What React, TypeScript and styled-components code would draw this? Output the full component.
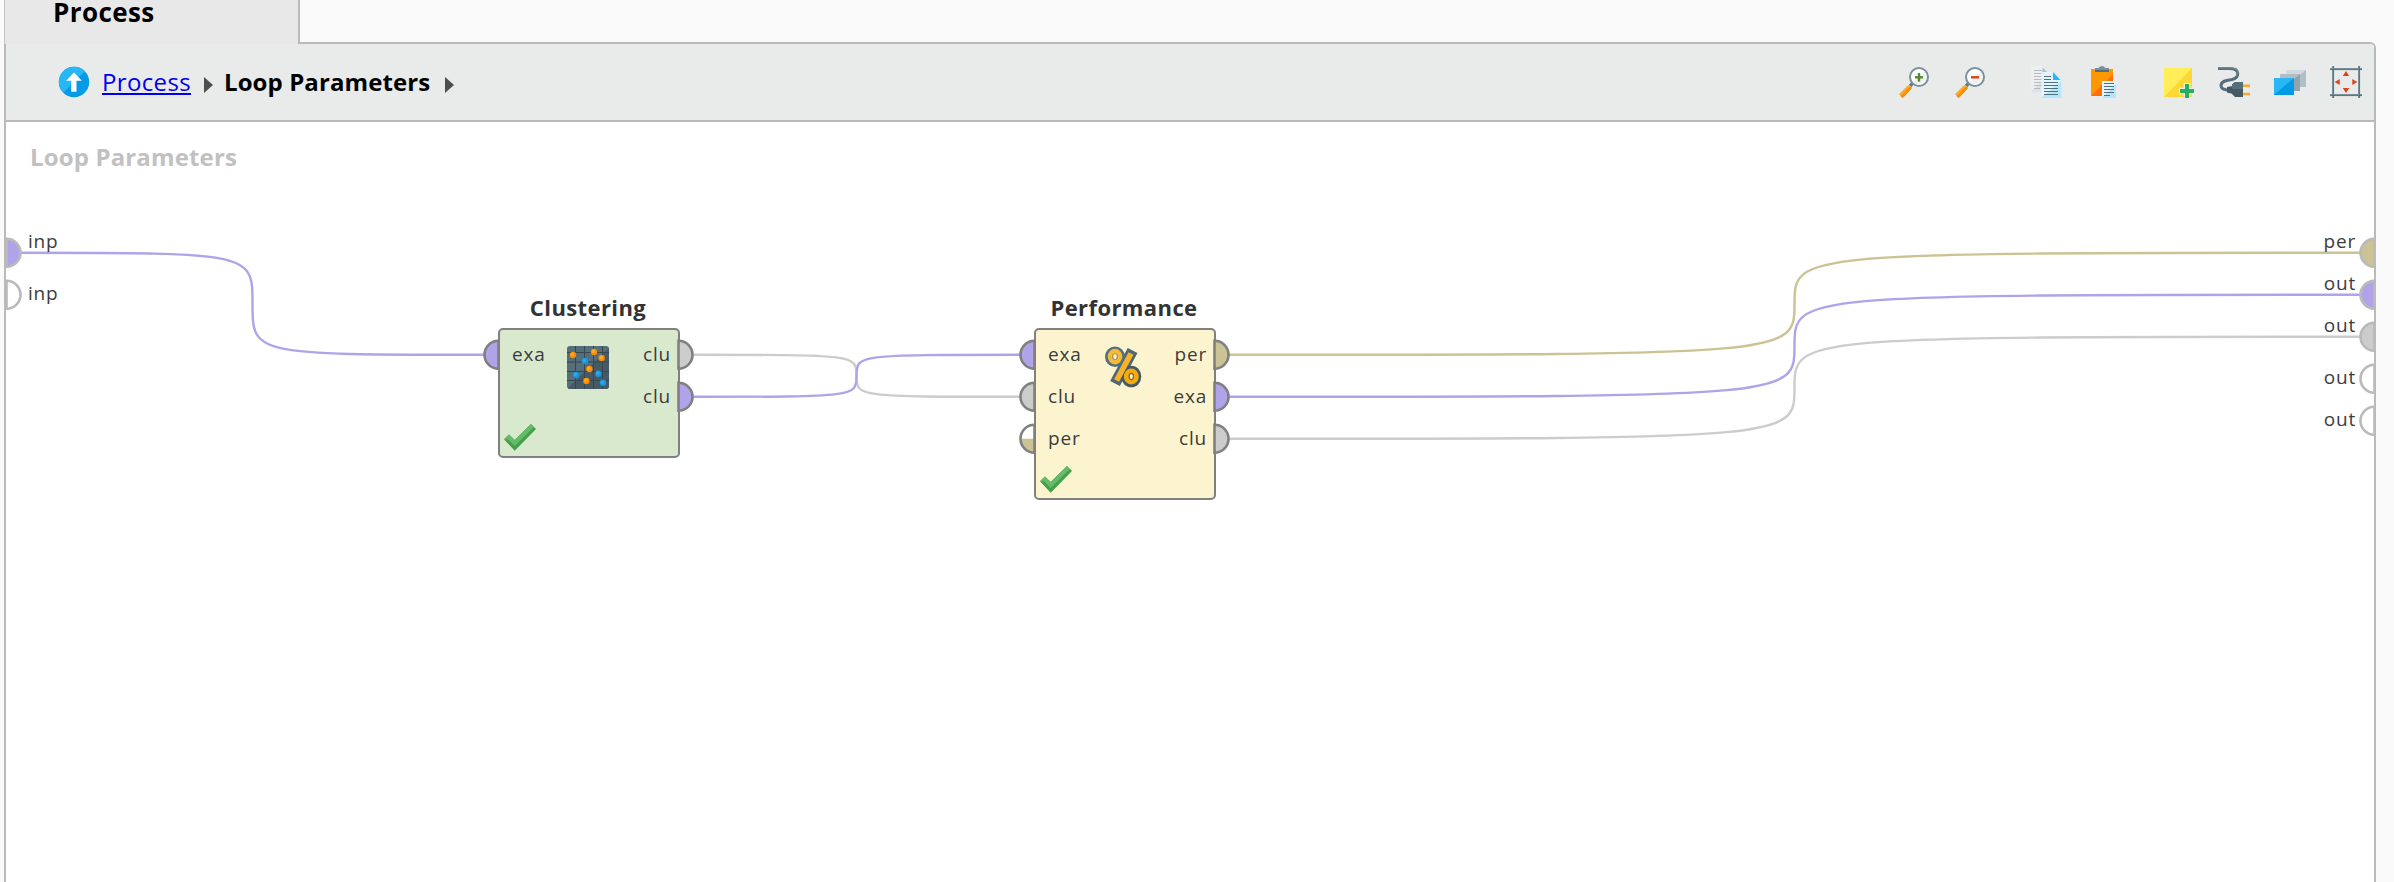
import React from "react";
import styled, { createGlobalStyle } from "styled-components";

const GlobalStyle = createGlobalStyle`
  html, body { margin: 0; padding: 0; background: #fafafa; }
  body { font-family: "Open Sans", "Noto Sans", sans-serif; overflow: hidden; }
  * { box-sizing: border-box; }
`;

const violet = "#b1a3ea";
const khaki = "#cbc394";
const silver = "#cccccc";
const line = "#bababa";

const Page = styled.div`
  display: flex;
  flex-direction: column;
  width: 2394px;
  height: 882px;
  padding: 0 18px 0 4px;
  overflow: hidden;
`;

const TabStrip = styled.div`
  display: flex;
  flex: none;
  height: 42px;
`;

const Tab = styled.div`
  position: relative;
  z-index: 1;
  width: 296px;
  height: 44px;
  padding-left: 48px;
  border-left: 1px solid #c4c4c4;
  border-right: 2px solid ${line};
  background: #e8e8e8;
  color: #000;
  font-size: 26px;
  font-weight: 700;
  line-height: 25px;
  letter-spacing: 0.4px;
`;

const Panel = styled.div`
  display: flex;
  flex: 1;
  flex-direction: column;
  border: 2px solid ${line};
  border-bottom: 0;
  border-radius: 0 6px 0 0;
  background: #fff;
`;

const Toolbar = styled.div`
  display: flex;
  flex: none;
  align-items: center;
  justify-content: space-between;
  height: 78px;
  padding: 0 12px 0 52px;
  border-bottom: 2px solid ${line};
  border-radius: 0 4px 0 0;
  background: #e8ebea;
`;

const Breadcrumb = styled.nav`
  display: flex;
  align-items: center;
  font-size: 24px;
  line-height: 34px;
  white-space: nowrap;
`;

const CrumbLink = styled.a`
  margin: -1px 0 0 12px;
  color: #0000ee;
  letter-spacing: 0.35px;
  text-decoration: underline;
  text-decoration-thickness: 2px;
  text-underline-offset: 2px;
`;

const CrumbCurrent = styled.span`
  margin: -1px 0 0 11px;
  color: #000;
  font-weight: 700;
  letter-spacing: 0.1px;
`;

const Arrow = styled.span<{ $gap: number }>`
  width: 0;
  height: 0;
  margin: 6px 0 0 ${(p) => p.$gap}px;
  border: solid transparent;
  border-width: 8px 0 8px 9px;
  border-left-color: #4e4e4e;
`;

const Tools = styled.div`
  display: flex;
  gap: 44px;
`;

const ToolGroup = styled.div`
  display: flex;
  gap: 24px;
`;

const Glyph = styled.svg`
  display: block;
  flex: none;
  overflow: visible;
`;

const Canvas = styled.div`
  position: relative;
  flex: 1;
  overflow: hidden;
  background: #fff;
`;

const CanvasTitle = styled.div`
  padding: 18px 0 0 24px;
  color: #c1c1c1;
  font-size: 24px;
  font-weight: 700;
  line-height: 34px;
  letter-spacing: 0.15px;
`;

const Wires = styled.svg`
  position: absolute;
  inset: 0;
`;

const PortLabel = styled.span`
  color: #3c3c3c;
  font-size: 19px;
  line-height: 42px;
  letter-spacing: 0.8px;
  white-space: nowrap;
`;

const EdgeLabel = styled(PortLabel)<{ $y: number; $side: "left" | "right" }>`
  position: absolute;
  top: ${(p) => p.$y - 21}px;
  ${(p) => (p.$side === "left" ? "left: 22px;" : "right: 18px;")}
`;

const Operator = styled.div<{ $x: number; $y: number }>`
  position: absolute;
  left: ${(p) => p.$x}px;
  top: ${(p) => p.$y}px;
  display: flex;
  flex-direction: column;
  width: 182px;
`;

const OperatorTitle = styled.div`
  align-self: center;
  height: 36px;
  margin-left: -2px;
  color: #333;
  font-size: 22px;
  font-weight: 700;
  line-height: 31px;
  letter-spacing: 0.4px;
  white-space: nowrap;
`;

const OperatorBody = styled.div<{ $fill: string; $height: number }>`
  display: grid;
  grid-template-columns: 1fr 42px 1fr;
  grid-template-rows: auto 1fr;
  height: ${(p) => p.$height}px;
  padding: 3px 7px 5px 12px;
  border: 2px solid #808080;
  border-radius: 5px;
  background: ${(p) => p.$fill};
`;

const PortColumn = styled.div<{ $align: "start" | "end" }>`
  display: flex;
  flex-direction: column;
  align-items: flex-${(p) => p.$align};
`;

const IconSlot = styled.div`
  padding-top: 13px;
  margin-left: -4px;
`;

const StatusSlot = styled.div`
  align-self: end;
  margin-left: -8px;
`;

const Icon = ({ children }: { children: React.ReactNode }) => (
  <Glyph width="32" height="32" viewBox="0 0 32 32">{children}</Glyph>
);

const Magnifier = ({ plus }: { plus?: boolean }) => (
  <Icon>
    <path d="M12 20l3-3" stroke="#607d8b" strokeWidth="3.4" />
    <path d="M1 28.3L10.3 19l3.7 3L4.7 32z" fill="#ffa726" />
    <path d="M2.8 30.2L12 20.5l2 1.5L4.7 32z" fill="#fb8c00" />
    <circle cx="21" cy="11" r="9" fill="#fff" stroke="#78909c" strokeWidth="2" />
    <path d="M26.6 5.4a8 8 0 0 1-11.2 11.2z" fill="#eef0f1" />
    <path d="M17 11.3h8" stroke={plus ? "#558b2f" : "#d84315"} strokeWidth="2.4" />
    {plus && <path d="M21 7v8.6" stroke="#558b2f" strokeWidth="2.4" />}
  </Icon>
);

const CopyIcon = () => (
  <Icon>
    <path d="M1 0h11l5 5v21H1z" fill="#eceff1" />
    <path d="M1 26L17 9v17z" fill="#dbe1e4" />
    <path d="M12.5 1.5l4.5 4.5h-4.500z" fill="#b0bec5" />
    <path d="M4 4.500h8M4 7.500h8M4 10.500h8M4 13.500h8M4 16.500h8M4 19.500h8M4 22.500h6" stroke="#b7bcbf" />
    <path d="M11.300 6H23l8.300 8.300V32h-20z" fill="#e1f5fe" />
    <path d="M11.300 32l20-17.500V32z" fill="#b3e5fc" />
    <path d="M23 6l7.500 8H23z" fill="#29b6f6" />
    <path d="M14 10.500h7M14 13.500h7M14 16.500h14M14 19.500h14M14 22.500h14M14 25.500h14M14 28.500h14" stroke="#546e7a" />
  </Icon>
);

const PasteIcon = () => (
  <Icon>
    <path d="M5 3h22v27H5z" fill="#ff9800" />
    <path d="M5 30L27 8v22z" fill="#ff6f00" />
    <path d="M9 6V2h3.500q3.500-4 7 0H23v4z" fill="#78909c" />
    <path d="M9 4h14v2H9z" fill="#546e7a" />
    <path d="M16 15h14v17H16z" fill="#e1f5fe" />
    <path d="M16 32l14-14v14z" fill="#b3e5fc" />
    <path d="M18 17.500h10M18 20.500h10M18 23.500h10M18 26.500h10M18 29.500h6" stroke="#546e7a" />
  </Icon>
);

const NoteIcon = () => (
  <Icon>
    <path d="M2 2h28v29H2z" fill="#ffee58" />
    <path d="M2 31L30 2v29z" fill="#fdd835" />
    <path d="M25 17v16M17 25h16" stroke="#e8ebea" strokeWidth="6.500" />
    <path d="M25 18v14M18 25h14" stroke="#27ae60" strokeWidth="4" />
  </Icon>
);

const PlugIcon = () => (
  <Icon>
    <path d="M0 2.500h12c10 0 10 9.500 2 11C6 14.500 3 16 3 19.500c0 3 2.500 4 6 4.500h4" fill="none" stroke="#546e7a" strokeWidth="3" />
    <path d="M0 1.800h12c8 0 9 5 6.500 8" fill="none" stroke="#78909c" />
    <path d="M9 21l6-1v8l-6-1.500z" fill="#455a64" />
    <path d="M14 18.500L17 16h8v15h-8l-3-3z" fill="#455a64" />
    <path d="M14 18.500L17 16h8v7H14z" fill="#546e7a" />
    <path d="M25 19.700h7M25 28h7" stroke="#ffa726" strokeWidth="2.400" />
  </Icon>
);

const StackIcon = () => (
  <Icon>
    <path d="M12 4h20v17H12z" fill="#cfd8dc" />
    <path d="M32 4v17H12z" fill="#b0bec5" />
    <path d="M6 8h20v17H6z" fill="#b0bec5" />
    <path d="M26 8v17H6z" fill="#90a4ae" />
    <path d="M0 12h20v17H0z" fill="#29b6f6" />
    <path d="M20 12v17H0z" fill="#039be5" />
  </Icon>
);

const FitIcon = () => (
  <Icon>
    <path d="M3 0v32M29 0v32M0 3h32M0 29h32" stroke="#78909c" strokeWidth="2" />
    <path d="M3.600 0v32M29.600 0v32M0 3.600h32M0 29.600h32" stroke="#546e7a" strokeWidth="0.800" />
    <path d="M16 5l3.200 5h-6.400zM16 27l3.200-5h-6.400zM4.700 16l5-3v6zM27.300 16l-5-3v6z" fill="#dd4315" />
  </Icon>
);

const UpIcon = () => (
  <Icon>
    <circle cx="16" cy="16" r="15.200" fill="#039be5" />
    <path d="M5.300 26.800A15.200 15.200 0 0 1 26.800 5.300z" fill="#29b6f6" />
    <path d="M16 6.500l7.800 8.200h-5.300v11h-5.300v-11H8.200z" fill="#fff" />
  </Icon>
);

const Check = () => (
  <Glyph width="32" height="27" viewBox="0 0 32 27">
    <path d="M0 15.200L5 10.500l5.700 5.500L27 0l5 5-21.300 21.700z" fill="#43a047" />
    <path d="M0 15.200L5 10.500l5.700 5.500L27 0l3 3-19.300 19L3 14.500l-1.800 1.900z" fill="#66bb6a" />
  </Glyph>
);

const orangeDots = [[6, 9], [27, 6], [34.700, 12], [22.400, 23], [19.400, 35]];
const blueDots = [[18, 15], [9, 29], [31.400, 27.700], [36, 36.800]];

const ClusterIcon = () => (
  <Glyph width="42" height="43" viewBox="0 0 42 43">
    <rect width="42" height="43" rx="3" fill="#546e7a" />
    <path d="M42 2v38q0 3-3 3H3q-2 0-2-1z" fill="#455a64" />
    <path d="M8.500 0v43M17.500 0v43M26.500 0v43M35.500 0v43M0 6.500h42M0 16h42M0 25.500h42M0 34.500h42" stroke="#36474f" strokeWidth="1" />
    {orangeDots.map(([x, y]) => <circle key={`${x}-${y}`} cx={x} cy={y} r="3.200" fill="#fb8c00" />)}
    {orangeDots.map(([x, y]) => <circle key={`h${x}`} cx={x - 0.600} cy={y - 0.600} r="1.800" fill="#ffa726" />)}
    {blueDots.map(([x, y]) => <circle key={`${x}-${y}`} cx={x} cy={y} r="3.200" fill="#1a96dc" />)}
    {blueDots.map(([x, y]) => <circle key={`h${x}`} cx={x - 0.600} cy={y - 0.600} r="1.800" fill="#29a9ee" />)}
  </Glyph>
);

const PercentIcon = () => (
  <Glyph width="42" height="43" viewBox="0 0 42 43">
    <path d="M29.600 4.500L12 37.500" stroke="#4e6876" strokeWidth="11" />
    <ellipse cx="12" cy="10.800" rx="10" ry="10.300" fill="#546e7a" />
    <ellipse cx="28.300" cy="30.500" rx="10" ry="10.800" fill="#455a64" />
    <path d="M28 7.500L13.600 34.500" stroke="#f6b32a" strokeWidth="5.600" />
    <ellipse cx="12" cy="10.600" rx="5" ry="5.500" fill="none" stroke="#f5bb38" strokeWidth="4.600" />
    <ellipse cx="12" cy="10.600" rx="2.200" ry="3" fill="#fcf4cf" stroke="#a98d4a" strokeWidth="0.900" />
    <ellipse cx="28.300" cy="30.500" rx="5" ry="5.600" fill="none" stroke="#f5ab0c" strokeWidth="4.800" />
    <ellipse cx="28.300" cy="30.500" rx="2.100" ry="3.100" fill="#fcf4cf" stroke="#7b6a36" strokeWidth="1.100" />
  </Glyph>
);

interface PortSpec {
  x: number;
  y: number;
  side: "left" | "right";
  fill: string;
  stroke: string;
  half?: boolean;
}

const Port = ({ x, y, side, fill, stroke, half }: PortSpec) => {
  const sweep = side === "right" ? 1 : 0;
  const edge = side === "right" ? 14 : -14;
  return (
    <g transform={`translate(${x} ${y})`}>
      <path d={`M0 -14A14 14 0 0 ${sweep} 0 14Z`} fill={half ? "#fff" : fill} />
      {half && <path d={`M0 0H${edge}A14 14 0 0 0 0 14Z`} fill={fill} />}
      <path d={`M0 -14A14 14 0 0 ${sweep} 0 14Z`} fill="none" stroke={stroke} strokeWidth="2.600" />
    </g>
  );
};

const Wire = ({ x1, y1, x2, y2, color }: { x1: number; y1: number; x2: number; y2: number; color: string }) => {
  const mx = (x1 + x2) / 2;
  const my = (y1 + y2) / 2;
  return (
    <path
      d={`M${x1} ${y1}C${mx} ${y1} ${mx} ${y1} ${mx} ${my}C${mx} ${y2} ${mx} ${y2} ${x2} ${y2}`}
      fill="none"
      stroke={color}
      strokeWidth="2.400"
    />
  );
};

const nodeStroke = "#808080";
const edgeStroke = "#bababa";

const ports: PortSpec[] = [
  { x: 0.500, y: 130.800, side: "right", fill: violet, stroke: edgeStroke },
  { x: 0.500, y: 172.800, side: "right", fill: "#fff", stroke: edgeStroke },
  { x: 492.500, y: 232.800, side: "left", fill: violet, stroke: nodeStroke },
  { x: 672.500, y: 232.800, side: "right", fill: silver, stroke: nodeStroke },
  { x: 672.500, y: 274.800, side: "right", fill: violet, stroke: nodeStroke },
  { x: 1028.500, y: 232.800, side: "left", fill: violet, stroke: nodeStroke },
  { x: 1028.500, y: 274.800, side: "left", fill: silver, stroke: nodeStroke },
  { x: 1028.500, y: 316.800, side: "left", fill: khaki, stroke: nodeStroke, half: true },
  { x: 1208.500, y: 232.800, side: "right", fill: khaki, stroke: nodeStroke },
  { x: 1208.500, y: 274.800, side: "right", fill: violet, stroke: nodeStroke },
  { x: 1208.500, y: 316.800, side: "right", fill: silver, stroke: nodeStroke },
  { x: 2368.500, y: 130.800, side: "left", fill: khaki, stroke: edgeStroke },
  { x: 2368.500, y: 172.800, side: "left", fill: violet, stroke: edgeStroke },
  { x: 2368.500, y: 214.800, side: "left", fill: silver, stroke: edgeStroke },
  { x: 2368.500, y: 256.800, side: "left", fill: "#fff", stroke: edgeStroke },
  { x: 2368.500, y: 298.800, side: "left", fill: "#fff", stroke: edgeStroke },
];

interface OperatorProps {
  x: number;
  y: number;
  title: string;
  fill: string;
  height: number;
  inputs: string[];
  outputs: string[];
  icon: React.ReactNode;
}

const OperatorNode = ({ x, y, title, fill, height, inputs, outputs, icon }: OperatorProps) => (
  <Operator $x={x} $y={y}>
    <OperatorTitle>{title}</OperatorTitle>
    <OperatorBody $fill={fill} $height={height}>
      <PortColumn $align="start">{inputs.map((p, i) => <PortLabel key={i}>{p}</PortLabel>)}</PortColumn>
      <IconSlot>{icon}</IconSlot>
      <PortColumn $align="end">{outputs.map((p, i) => <PortLabel key={i}>{p}</PortLabel>)}</PortColumn>
      <StatusSlot><Check /></StatusSlot>
    </OperatorBody>
  </Operator>
);

export default function App() {
  return (
    <Page>
      <GlobalStyle />
      <TabStrip><Tab>Process</Tab></TabStrip>
      <Panel>
        <Toolbar>
          <Breadcrumb>
            <UpIcon />
            <CrumbLink>Process</CrumbLink>
            <Arrow $gap={13} />
            <CrumbCurrent>Loop Parameters</CrumbCurrent>
            <Arrow $gap={15} />
          </Breadcrumb>
          <Tools>
            <ToolGroup><Magnifier plus /><Magnifier /></ToolGroup>
            <ToolGroup><CopyIcon /><PasteIcon /></ToolGroup>
            <ToolGroup><NoteIcon /><PlugIcon /><StackIcon /><FitIcon /></ToolGroup>
          </Tools>
        </Toolbar>
        <Canvas>
          <CanvasTitle>Loop Parameters</CanvasTitle>
          <OperatorNode
            x={492} y={170} title="Clustering" fill="#d8e9ce" height={130}
            inputs={["exa"]} outputs={["clu", "clu"]} icon={<ClusterIcon />}
          />
          <OperatorNode
            x={1028} y={170} title="Performance" fill="#fcf4cf" height={172}
            inputs={["exa", "clu", "per"]} outputs={["per", "exa", "clu"]} icon={<PercentIcon />}
          />
          <Wires width="2368" height="760">
            <Wire x1={14} y1={130.800} x2={479} y2={232.800} color={violet} />
            <Wire x1={687} y1={232.800} x2={1014} y2={274.800} color={silver} />
            <Wire x1={687} y1={274.800} x2={1014} y2={232.800} color={violet} />
            <Wire x1={1223} y1={232.800} x2={2354} y2={130.800} color={khaki} />
            <Wire x1={1223} y1={316.800} x2={2354} y2={214.800} color={silver} />
            <Wire x1={1223} y1={274.800} x2={2354} y2={172.800} color={violet} />
            {ports.map((p) => <Port key={`${p.x}:${p.y}`} {...p} />)}
          </Wires>
          <EdgeLabel $side="left" $y={119}>inp</EdgeLabel>
          <EdgeLabel $side="left" $y={171}>inp</EdgeLabel>
          <EdgeLabel $side="right" $y={119}>per</EdgeLabel>
          <EdgeLabel $side="right" $y={161}>out</EdgeLabel>
          <EdgeLabel $side="right" $y={203}>out</EdgeLabel>
          <EdgeLabel $side="right" $y={255}>out</EdgeLabel>
          <EdgeLabel $side="right" $y={297}>out</EdgeLabel>
        </Canvas>
      </Panel>
    </Page>
  );
}
